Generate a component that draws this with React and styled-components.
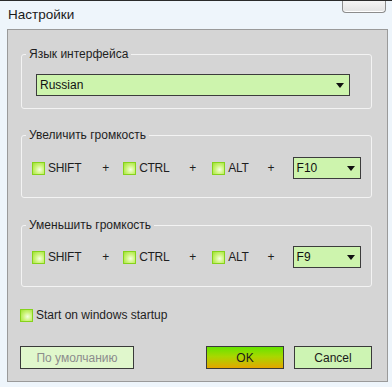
import React from 'react';
import styled, { createGlobalStyle } from 'styled-components';

const GlobalStyle = createGlobalStyle`
  body {
    margin: 0;
    background: #eef5fb;
    font-family: "Liberation Sans", Arial, sans-serif;
    font-size: 12px;
    color: #1e1e1e;
  }
`;

const Window = styled.div`
  width: 392px;
  height: 387px;
  border-top: 1px solid #2a2a2a;
  box-sizing: border-box;
  padding: 0 4px 0 7px;
`;

const TitleBar = styled.div`
  display: flex;
  justify-content: space-between;
  align-items: flex-start;
  height: 28px;
`;

const Title = styled.h1`
  margin: 6px 0 0 1px;
  font-size: 13.5px;
  font-weight: normal;
  color: #1a1a1a;
  line-height: 16px;
`;

const CloseButton = styled.div`
  width: 42px;
  height: 11px;
  margin-right: 2px;
  border: 1px solid #8c8c8c;
  border-top: none;
  border-radius: 0 0 4px 4px;
  background: linear-gradient(#f4f4f4, #e2e2e2);
  box-shadow: inset 0 -1px 0 #fff;
`;

const Panel = styled.div`
  height: 353px;
  box-sizing: border-box;
  background: #d5d5d5;
  border: 1px solid #9a9a9a;
  padding: 17px 15px 0 13px;
`;

const Group = styled.fieldset`
  margin: 0 0 ${(p) => p.$gap || 0}px;
  padding: ${(p) => p.$pad};
  border: 1px solid #f3f3f3;
  border-radius: 3px;
  min-width: 0;
`;

const Legend = styled.legend`
  margin-left: 4px;
  padding: 0 3px;
  line-height: 14px;
  font-size: 12px;
  color: #1e1e1e;
`;

const Select = styled.div`
  display: flex;
  align-items: center;
  justify-content: space-between;
  box-sizing: border-box;
  width: ${(p) => p.$width}px;
  height: 22px;
  margin-left: ${(p) => p.$offset || 0}px;
  padding: 0 5px 0 3px;
  background: #cdf4ad;
  border: 1px solid #3c3c3c;
  font-size: 12px;
  color: #111;
`;

const Arrow = () => (
  <svg width="8" height="5" viewBox="0 0 8 5">
    <path d="M0 0 H8 L4 5 Z" fill="#111" />
  </svg>
);

const Row = styled.div`
  display: flex;
  align-items: center;
  height: 22px;
  padding-left: 10px;
`;

const Check = styled.span`
  display: inline-block;
  width: 13px;
  height: 13px;
  box-sizing: border-box;
  border: 1px solid #86d21c;
  background: radial-gradient(circle at 60% 60%, #f4fee2 0%, #cdf47c 45%, #9fe22e 100%);
  margin-right: 3px;
  flex-shrink: 0;
`;

const KeyLabel = styled.span`
  display: inline-flex;
  align-items: center;
  font-size: 12px;
  letter-spacing: -0.3px;
  color: #1e1e1e;
`;

const Plus = styled.span`
  margin: 0 ${(p) => p.$right}px 0 ${(p) => p.$left}px;
  font-size: 12px;
  color: #1e1e1e;
`;

const Startup = styled.label`
  display: flex;
  align-items: center;
  margin: 21px 0 0 -1px;
  height: 14px;
  font-size: 12px;
  color: #1e1e1e;
`;

const Buttons = styled.div`
  display: flex;
  align-items: center;
  margin-top: 24px;
  margin-left: -1px;
  gap: 10px;
`;

const Button = styled.button`
  box-sizing: border-box;
  width: ${(p) => p.$width}px;
  height: 23px;
  padding: 0;
  border: 1px solid #3a3a3a;
  background: ${(p) =>
    p.$primary ? 'linear-gradient(#66e400, #a8d800 45%, #e4a600)' : p.$muted ? '#e0f7cc' : '#cdf4b3'};
  color: ${(p) => (p.$muted ? '#8c8c8c' : '#1a1a1a')};
  font-family: "Liberation Sans", Arial, sans-serif;
  font-size: 12px;
  margin-left: ${(p) => (p.$push ? 'auto' : '0')};
`;

const HotkeyRow = ({ keyName }) => (
  <Row>
    <KeyLabel><Check />SHIFT</KeyLabel>
    <Plus $left={21} $right={14}>+</Plus>
    <KeyLabel><Check />CTRL</KeyLabel>
    <Plus $left={20} $right={16}>+</Plus>
    <KeyLabel><Check />ALT</KeyLabel>
    <Plus $left={19} $right={18}>+</Plus>
    <Select $width={68}>
      {keyName}
      <Arrow />
    </Select>
  </Row>
);

export default function App() {
  return (
    <>
      <GlobalStyle />
      <Window>
        <TitleBar>
          <Title>Настройки</Title>
          <CloseButton />
        </TitleBar>
        <Panel>
          <Group $pad="13px 0 12px" $gap={19}>
            <Legend>Язык интерфейса</Legend>
            <Select $width={314} $offset={14}>
              Russian
              <Arrow />
            </Select>
          </Group>
          <Group $pad="15px 0 18px" $gap={20}>
            <Legend>Увеличить громкость</Legend>
            <HotkeyRow keyName="F10" />
          </Group>
          <Group $pad="14px 0 18px">
            <Legend>Уменьшить громкость</Legend>
            <HotkeyRow keyName="F9" />
          </Group>
          <Startup>
            <Check />Start on windows startup
          </Startup>
          <Buttons>
            <Button $width={114} $muted>По умолчанию</Button>
            <Button $width={78} $primary $push>OK</Button>
            <Button $width={78}>Cancel</Button>
          </Buttons>
        </Panel>
      </Window>
    </>
  );
}
